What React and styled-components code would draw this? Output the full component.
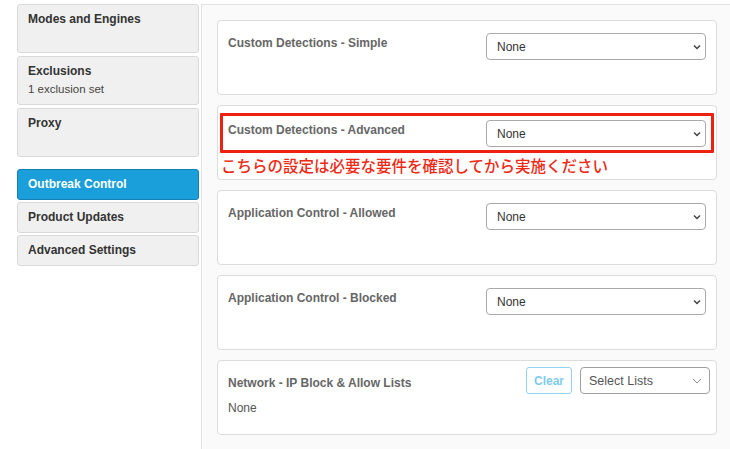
import React from "react";
import styled, { createGlobalStyle } from "styled-components";

const GlobalStyle = createGlobalStyle`
  html, body { margin: 0; padding: 0; background: #ffffff; }
  body { font-family: "Liberation Sans", Arial, Helvetica, sans-serif; }
  * { box-sizing: border-box; }
`;

const Page = styled.div`
  display: flex;
  width: 730px;
  height: 449px;
  padding: 4px 0 0 17px;
  overflow: hidden;
`;

const Sidebar = styled.nav`
  width: 182px;
  flex-shrink: 0;
  display: flex;
  flex-direction: column;
`;

const NavItem = styled.div`
  height: ${(p) => (p.$tall ? "49px" : "31px")};
  margin-bottom: ${(p) => (p.$tall ? "3px" : "2px")};
  margin-top: ${(p) => (p.$gapBefore ? "9px" : "0")};
  padding: ${(p) => (p.$tall ? "7px 10px" : "7px 10px")};
  background: ${(p) => (p.$active ? "#1a9fda" : "#f0f0f0")};
  border: 1px solid ${(p) => (p.$active ? "#1580b3" : "#d9d9d9")};
  border-radius: 3px;
  color: ${(p) => (p.$active ? "#ffffff" : "#333333")};
`;

const NavTitle = styled.div`
  font-size: 12px;
  font-weight: 700;
  line-height: 15px;
`;

const NavSub = styled.div`
  margin-top: 3px;
  font-size: 11.5px;
  line-height: 15px;
  color: #444;
`;

const Main = styled.main`
  flex: 1;
  margin-left: 2px;
  background: #fafafa;
  border-left: 1px solid #e2e2e2;
  border-top: 1px solid #e2e2e2;
  padding: 15px 13px 0 15px;
`;

const Card = styled.section`
  height: 75px;
  margin-bottom: 10px;
  background: #ffffff;
  border: 1px solid #dcdcdc;
  border-radius: 4px;
  padding: ${(p) => p.$pad || "12px 10px 0 10px"};
`;

const Row = styled.div`
  display: flex;
  justify-content: space-between;
  align-items: ${(p) => (p.$center ? "center" : "flex-start")};
`;

const Title = styled.div`
  margin-top: ${(p) => (p.$mt != null ? p.$mt : "2px")};
  font-size: 12px;
  font-weight: 700;
  line-height: 16px;
  color: #666666;
`;

const Highlight = styled.div`
  border: 3px solid #ee2010;
  border-radius: 1px;
  padding: 4px 5px 3px 5px;
`;

const Warning = styled.div`
  margin-top: 2px;
  padding-left: 1px;
  font-family: "Noto Sans CJK JP", "Noto Sans CJK SC", sans-serif;
  font-size: 15.5px;
  font-weight: 500;
  line-height: 20px;
  color: #ee2a16;
  white-space: nowrap;
`;

const SelectBox = styled.div`
  width: ${(p) => p.$w || "220px"};
  height: 27px;
  display: flex;
  align-items: center;
  justify-content: space-between;
  padding: ${(p) => p.$pad || "0 4px 0 10px"};
  background: #ffffff;
  border: 1px solid ${(p) => p.$border || "#a9a9a9"};
  border-radius: 4px;
  font-size: ${(p) => p.$fs || "12px"};
  color: ${(p) => p.$color || "#333333"};
  flex-shrink: 0;
`;

const Controls = styled.div`
  display: flex;
  gap: 8px;
`;

const ClearButton = styled.button`
  width: 46px;
  height: 27px;
  padding: 0;
  background: #ffffff;
  border: 1px solid #90d4ef;
  border-radius: 3px;
  color: #7fcbeb;
  font-family: inherit;
  font-size: 12px;
  font-weight: 700;
`;

const Value = styled.div`
  margin-top: 6px;
  font-size: 12px;
  line-height: 16px;
  color: #555555;
`;

const Chevron = ({ thin }) =>
  thin ? (
    <svg width="10" height="6" viewBox="0 0 10 6">
      <path d="M1 1 L5 5 L9 1" fill="none" stroke="#8a8a8a" strokeWidth="1" />
    </svg>
  ) : (
    <svg width="8" height="6" viewBox="0 0 8 6">
      <path d="M1 1.5 L4 4.5 L7 1.5" fill="none" stroke="#444" strokeWidth="1.5" />
    </svg>
  );

const NoneSelect = () => (
  <SelectBox>
    <span>None</span>
    <Chevron />
  </SelectBox>
);

const simpleCards = [
  "Application Control - Allowed",
  "Application Control - Blocked",
];

export default function App() {
  return (
    <>
      <GlobalStyle />
      <Page>
        <Sidebar>
          <NavItem $tall>
            <NavTitle>Modes and Engines</NavTitle>
          </NavItem>
          <NavItem $tall>
            <NavTitle>Exclusions</NavTitle>
            <NavSub>1 exclusion set</NavSub>
          </NavItem>
          <NavItem $tall>
            <NavTitle>Proxy</NavTitle>
          </NavItem>
          <NavItem $active $gapBefore>
            <NavTitle>Outbreak Control</NavTitle>
          </NavItem>
          <NavItem>
            <NavTitle>Product Updates</NavTitle>
          </NavItem>
          <NavItem>
            <NavTitle>Advanced Settings</NavTitle>
          </NavItem>
        </Sidebar>
        <Main>
          <Card>
            <Row>
              <Title>Custom Detections - Simple</Title>
              <NoneSelect />
            </Row>
          </Card>
          <Card $pad="7px 2px 0 2px">
            <Highlight>
              <Row>
                <Title>Custom Detections - Advanced</Title>
                <NoneSelect />
              </Row>
            </Highlight>
            <Warning>こちらの設定は必要な要件を確認してから実施ください</Warning>
          </Card>
          {simpleCards.map((t) => (
            <Card key={t}>
              <Row>
                <Title>{t}</Title>
                <NoneSelect />
              </Row>
            </Card>
          ))}
          <Card $pad="6px 6px 0 10px">
            <Row $center>
              <Title $mt="4px">Network - IP Block &amp; Allow Lists</Title>
              <Controls>
                <ClearButton>Clear</ClearButton>
                <SelectBox $w="130px" $pad="0 7px 0 8px" $border="#a0a0a0" $fs="12.5px" $color="#555">
                  <span>Select Lists</span>
                  <Chevron thin />
                </SelectBox>
              </Controls>
            </Row>
            <Value>None</Value>
          </Card>
        </Main>
      </Page>
    </>
  );
}
